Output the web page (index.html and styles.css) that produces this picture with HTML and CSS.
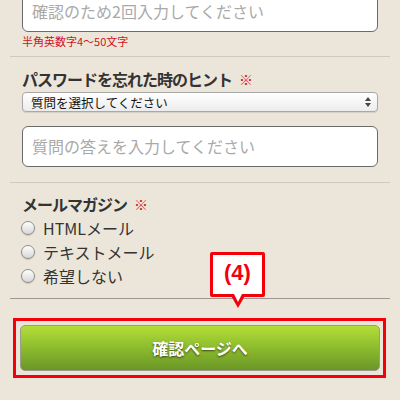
FILE: index.html
```html
<!DOCTYPE html>
<html lang="ja">
<head>
  <meta charset="UTF-8">
  <meta name="viewport" content="width=device-width, initial-scale=1.0">
  <title>会員登録</title>
  <link rel="stylesheet" href="styles.css">
</head>
<body>
  <div class="page">
    <div class="section first">
      <div class="field">
        <div class="text-input placeholder">確認のため2回入力してください</div>
        <p class="note">半角英数字4〜50文字</p>
      </div>
    </div>

    <div class="section hint">
      <div class="field">
        <h2 class="label">パスワードを忘れた時のヒント<span class="req">※</span></h2>
        <div class="select">
          <span>質問を選択してください</span>
          <span class="arrows"><i class="up"></i><i class="down"></i></span>
        </div>
        <div class="text-input placeholder answer">質問の答えを入力してください</div>
      </div>
    </div>

    <div class="section mail">
      <div class="field">
        <h2 class="label">メールマガジン<span class="req">※</span></h2>
        <ul class="radios">
          <li><span class="radio"></span>HTMLメール</li>
          <li><span class="radio"></span>テキストメール</li>
          <li><span class="radio"></span>希望しない</li>
        </ul>
      </div>
    </div>

    <div class="footer">
      <div class="callout">(4)</div>
      <div class="highlight">
        <button class="btn">確認ページへ</button>
      </div>
    </div>
  </div>
</body>
</html>
```

FILE: styles.css
```css
body {
  margin: 0;
  background-color: #ece6da;
  color: #333;
  font-family: "Noto Sans CJK JP", "Liberation Sans", sans-serif;
}
.page {
  padding: 0 10px;
}
.section {
  border-top: 1px solid #cfcac0;
}
.section.first {
  border-top: none;
  margin-top: -9px;
  padding-bottom: 8px;
}
.field {
  padding: 0 12px;
}
.text-input {
  box-sizing: border-box;
  height: 41px;
  width: 356px;
  padding: 0 9px;
  background: #fff;
  border: 1px solid #6b6b6b;
  border-radius: 6px;
  font-size: 16px;
  line-height: 39px;
}
.placeholder {
  color: #a9a9a9;
}
.note {
  margin: 2px 0 0;
  font-size: 11px;
  line-height: 14px;
  color: #d0121b;
}
.label {
  display: flex;
  align-items: center;
  height: 20px;
  margin: 0;
  padding-top: 12px;
  font-size: 16px;
  line-height: 20px;
  font-weight: bold;
  letter-spacing: -1px;
  color: #333;
}
.req {
  margin-left: 7px;
  font-size: 14px;
  line-height: 1;
  letter-spacing: 0;
  color: #d0121b;
  font-weight: normal;
}
.select {
  box-sizing: border-box;
  display: flex;
  justify-content: space-between;
  align-items: center;
  margin-top: 3px;
  height: 20px;
  width: 356px;
  padding: 0 6px 0 8px;
  border: 1px solid #a8a8a8;
  border-radius: 4px;
  background: linear-gradient(#ffffff, #ececec);
  font-size: 12.5px;
  color: #111;
  box-shadow: 0 1px 1px rgba(0, 0, 0, 0.1);
}
.arrows {
  display: flex;
  flex-direction: column;
  gap: 2px;
}
.arrows i {
  display: block;
  width: 0;
  height: 0;
  border-left: 3px solid transparent;
  border-right: 3px solid transparent;
}
.arrows .up {
  border-bottom: 4px solid #444;
}
.arrows .down {
  border-top: 4px solid #444;
}
.text-input.answer {
  margin-top: 14px;
}
.section.hint {
  padding-bottom: 15px;
}
.section.mail .label {
  padding-top: 11px;
}
.section.mail {
  padding-bottom: 10px;
}
.radios {
  list-style: none;
  margin: 2px 0 0;
  padding: 0;
}
.radios li {
  display: flex;
  align-items: center;
  height: 24px;
  font-size: 16px;
  color: #333;
}
.radio {
  flex: none;
  box-sizing: border-box;
  width: 14px;
  height: 14px;
  margin: 0 8px 0 -1px;
  border: 1px solid #8d8d8d;
  border-radius: 50%;
  background: linear-gradient(#ffffff, #d6d6d6);
  box-shadow: 0 1px 1px rgba(0, 0, 0, 0.15);
}
.footer {
  position: relative;
  border-top: 1px solid #9c9994;
  padding-top: 19px;
}
.callout {
  position: absolute;
  top: -47px;
  left: 200px;
  box-sizing: border-box;
  width: 55px;
  height: 45px;
  border: 3px solid #f4000a;
  border-radius: 2px;
  background: #fff;
  color: #f4000a;
  font-family: "Liberation Sans", sans-serif;
  font-weight: bold;
  font-size: 22px;
  line-height: 36px;
  text-align: center;
  z-index: 2;
}
.callout::before,
.callout::after {
  content: "";
  position: absolute;
  left: 50%;
  width: 0;
  height: 0;
}
.callout::before {
  top: 100%;
  margin-left: -8px;
  border-left: 8px solid transparent;
  border-right: 8px solid transparent;
  border-top: 14px solid #f4000a;
}
.callout::after {
  top: 100%;
  margin-left: -4px;
  border-left: 4px solid transparent;
  border-right: 4px solid transparent;
  border-top: 8px solid #fff;
}
.highlight {
  margin: 0 4px 0 3px;
  padding: 4px 3px 4px 4px;
  border: 3px solid #f4000a;
}
.btn {
  display: block;
  width: 100%;
  height: 46px;
  border: 1px solid #9a9a8e;
  border-radius: 5px;
  background: linear-gradient(#b3de37, #8cbb2e 50%, #6a9625);
  color: #fff;
  font-family: "Noto Sans CJK JP", sans-serif;
  font-weight: bold;
  font-size: 16px;
  text-shadow: 0 1px 2px rgba(0, 0, 0, 0.6);
  cursor: pointer;
}
```
